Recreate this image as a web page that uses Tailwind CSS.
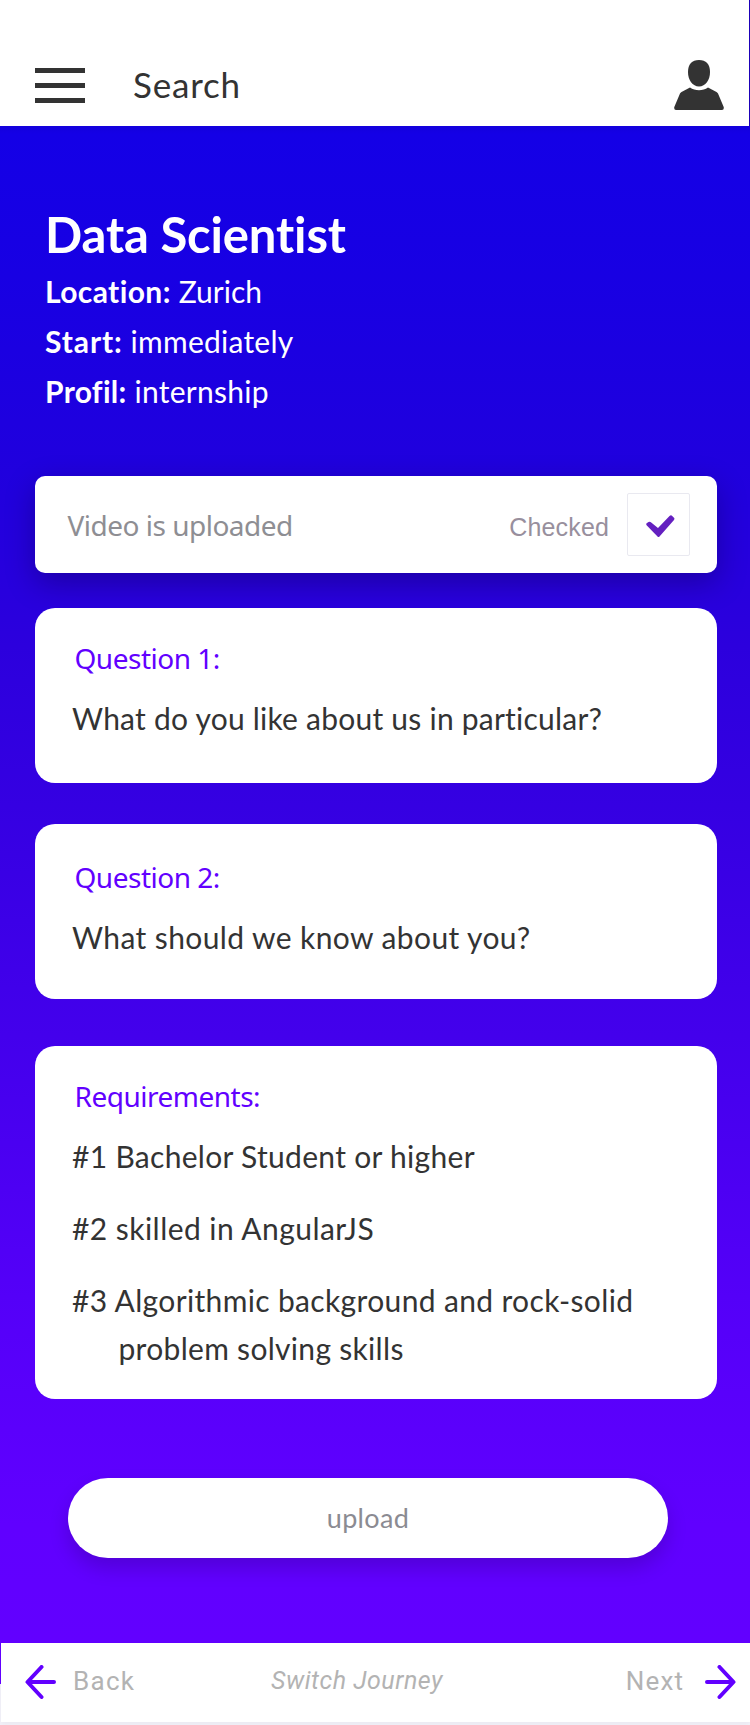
<!DOCTYPE html>
<html lang="en">
<head>
<meta charset="utf-8">
<title>Data Scientist</title>
<script src="https://cdn.jsdelivr.net/npm/@tailwindcss/browser@4"></script>
</head>
<body class="w-[750px] h-[1725px] overflow-hidden bg-[#f3f2fa] font-[Lato,sans-serif] text-[#333333]">
<div class="relative w-[750px] h-[1725px] flex flex-col overflow-hidden">
  <header class="h-[126px] shrink-0 flex items-start bg-white border-r border-[#1b00b8] pl-[35px] pr-[25px]">
    <div class="mt-[68px] w-[50px] flex flex-col gap-[10px]">
      <span class="h-[5px] bg-[#333333]"></span>
      <span class="h-[5px] bg-[#333333]"></span>
      <span class="h-[5px] bg-[#333333]"></span>
    </div>
    <span class="mt-[64px] ml-[48px] text-[35px] leading-[40px] whitespace-nowrap tracking-[0.8px]">Search</span>
    <svg class="mt-[60px] ml-auto" width="50" height="50" viewBox="0 0 50 50" fill="#333333">
      <path d="M25 0C32 0 36 4 36 12C36 20 31.500 26.500 25 26.500C18.500 26.500 14 20 14 12C14 4 18 0 25 0Z"/>
      <path d="M16 27.500C21 31.200 29 31.200 34 27.500L42.500 32Q43.500 32.500 44 33.500L49.700 47Q50.300 50 48 50H2Q-.300 50 .300 47L6 33.500Q6.500 32.500 7.500 32Z"/>
    </svg>
  </header>

  <main class="h-[1517px] shrink-0 flex flex-col items-start pl-[35px] pt-[78px] bg-[linear-gradient(180deg,#1300dc_0px,#1400e6_8px,#1800e3_150px,#2100dd_370px,#2c00dd_520px,#3500e2_680px,#4300ec_910px,#5400f8_1170px,#6000ff_1400px,#6200ff_1517px)]">
    <h1 class="ml-[10px] text-[49px] leading-[60px] font-bold text-white whitespace-nowrap tracking-[-0.15px] [font-variant-ligatures:none]">Data Scientist</h1>
    <div class="ml-[10px] mt-[2px] text-[30px] leading-[50px] text-white whitespace-nowrap tracking-[0.25px]">
      <p><b class="tracking-[0.4px]">Location:</b> <span class="tracking-normal">Zurich</span></p>
      <p><b class="tracking-[0.9px]">Start:</b> immediately</p>
      <p><b class="tracking-[0.3px]">Profil:</b> internship</p>
    </div>

    <section class="mt-[60px] w-[682px] h-[97px] shrink-0 rounded-[10px] bg-white shadow-[0_10px_30px_rgba(0,0,0,0.26)] flex items-start pl-[32.500px] pr-[27px]">
      <span class="mt-[29px] font-['Noto_Sans',sans-serif] text-[28px] leading-[40px] text-[#8e8e93] whitespace-nowrap tracking-[-0.5px]">Video is uploaded</span>
      <span class="mt-[31px] ml-auto mr-[18px] font-['Liberation_Sans',sans-serif] text-[25px] leading-[40px] text-[#988f9d] whitespace-nowrap tracking-[0.15px]">Checked</span>
      <span class="mt-[17px] w-[63px] h-[63px] border border-[#e9e9f0] rounded-[2px] flex justify-center items-center pl-[3px] pt-[3px]">
        <svg width="29" height="23" viewBox="0 0 29 23" fill="#6420c0"><path d="M.800 10.500Q-.500 9 1 8L2.500 7Q4 6.300 5.200 7.500L12 13L23.500 1Q25 -.300 26.200 .900L28.200 3Q28.800 4 28 5L13.500 21.500Q12.500 22.500 11.500 21.500Z"/></svg>
      </span>
    </section>

    <section class="mt-[35px] w-[682px] h-[175px] shrink-0 rounded-[20px] bg-white pt-[30px] whitespace-nowrap">
      <h2 class="ml-[39.500px] font-['Noto_Sans',sans-serif] text-[28px] leading-[40px] text-[#6200ff] tracking-[-0.5px]">Question 1:</h2>
      <p class="ml-[37px] mt-[16px] text-[30px] leading-[48px] tracking-[0.230px]">What do you like about us in particular?</p>
    </section>

    <section class="mt-[41px] w-[682px] h-[175px] shrink-0 rounded-[20px] bg-white pt-[33px] whitespace-nowrap">
      <h2 class="ml-[39.500px] font-['Noto_Sans',sans-serif] text-[28px] leading-[40px] text-[#6200ff] tracking-[-0.5px]">Question 2:</h2>
      <p class="ml-[37px] mt-[16px] text-[30px] leading-[48px] tracking-[0.4px]">What should we know about you?</p>
    </section>

    <section class="mt-[47px] w-[682px] h-[353px] shrink-0 rounded-[20px] bg-white pt-[30px] whitespace-nowrap">
      <h2 class="ml-[39.500px] font-['Noto_Sans',sans-serif] text-[28px] leading-[40px] text-[#6200ff] tracking-[-0.5px]">Requirements:</h2>
      <div class="ml-[37px] mt-[16px] flex flex-col gap-6 text-[30px] leading-[48px] tracking-[0.35px]">
        <p class="tracking-[0.3px]">#1 Bachelor Student or higher</p>
        <p class="tracking-[0.45px]">#2 skilled in AngularJS</p>
        <p>#3 Algorithmic background and rock-solid<br><span class="ml-[46.500px] tracking-[0.3px]">problem solving skills</span></p>
      </div>
    </section>

    <button class="mt-[79px] ml-[33px] w-[600px] h-[80px] shrink-0 rounded-full bg-white shadow-[0_10px_20px_rgba(0,0,0,0.16)] text-[27px] leading-[40px] text-[#8b8b92] tracking-[0.35px]">upload</button>
  </main>

  <footer class="ml-px h-[79px] shrink-0 bg-white shadow-[0_3px_6px_rgba(0,0,0,0.04)] flex items-start pl-[24px] pr-[14px] text-[25px] leading-[40px] text-[#b3b3b3] whitespace-nowrap font-[Roboto,sans-serif]">
    <svg class="mt-[22px]" width="31" height="35" viewBox="0 0 31 35" fill="none" stroke="#6200ff" stroke-width="4" stroke-linecap="round" stroke-linejoin="round"><path d="M29 17H3M16.500 2L2.500 17L16.500 32"/></svg>
    <span class="w-[198px] pl-[17px] mt-[18px] text-[26px] tracking-[1.300px]">Back</span>
    <span class="pl-[17px] mt-[18px] italic tracking-[0.5px]">Switch Journey</span>
    <span class="ml-auto mt-[18px] text-[26px] tracking-[1.100px]">Next</span>
    <svg class="mt-[22px] ml-[21px]" width="31" height="35" viewBox="0 0 31 35" fill="none" stroke="#6200ff" stroke-width="4" stroke-linecap="round" stroke-linejoin="round"><path d="M2 17H28M14.500 2L28.500 17L14.500 32"/></svg>
  </footer>
  <span class="absolute left-0 top-[1643px] w-px h-[41px] bg-[#6200ff]"></span>
</div>
</body>
</html>
